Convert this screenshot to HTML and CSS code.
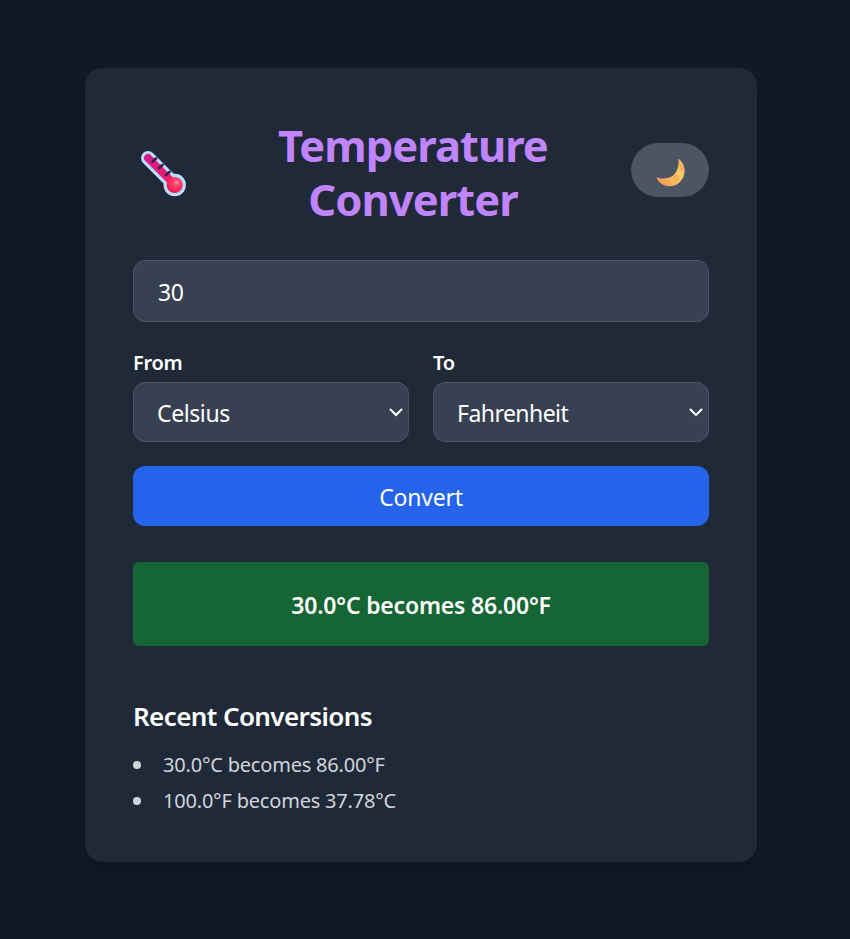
FILE: index.html
```html
<!DOCTYPE html>
<html lang="en">
<head>
<meta charset="utf-8">
<meta name="viewport" content="width=device-width, initial-scale=1">
<title>Temperature Converter</title>
<link rel="stylesheet" href="styles.css">
</head>
<body>
<main class="card">
  <header class="header">
    <svg class="thermometer" viewBox="0 0 48 48" aria-hidden="true">
      <defs>
        <linearGradient id="tube" x1="0" y1="0" x2="1" y2="1"><stop offset="0" stop-color="#d51b8b"/><stop offset="1" stop-color="#f51c68"/></linearGradient>
        <radialGradient id="bulb" cx=".62" cy=".35" r=".65"><stop offset="0" stop-color="#ff9cab"/><stop offset=".25" stop-color="#ff4b72"/><stop offset="1" stop-color="#f5174e"/></radialGradient>
      </defs>
      <path d="M8 8 34 34" stroke="#b9e0ff" stroke-width="14" stroke-linecap="round"/>
      <circle cx="34.700" cy="35" r="11.200" fill="#b9e0ff"/>
      <path d="M8 8 33 33" stroke="url(#tube)" stroke-width="8" stroke-linecap="round"/>
      <circle cx="34.700" cy="35" r="8.100" fill="url(#bulb)"/>
      <path d="m12.500 11.500 3.500-3M19 18l3.500-3M26 25l3.500-3" stroke="#37204f" stroke-width="2.900" stroke-linecap="round"/>
    </svg>
    <h1 class="title">Temperature<br>Converter</h1>
    <button class="theme" type="button" aria-label="Toggle theme">
      <svg class="moon" viewBox="0 0 30 30" aria-hidden="true">
        <defs><linearGradient id="moon" x1="1" y1="0" x2="0" y2="1"><stop offset="0" stop-color="#f4a65c"/><stop offset=".4" stop-color="#ffcf65"/><stop offset="1" stop-color="#f28b55"/></linearGradient></defs>
        <path d="M22.300.500c5 3.500 7.300 9.900 6 15.500-1.800 7.600-8.300 12.500-15.300 12.300C7.500 28.100 2.300 25 .500 19.300c4.500 1.800 11.800 2 16.500-1.800C21.500 13.800 23.500 7 22.300.500Z" fill="url(#moon)"/>
        <g fill="#f6b557" stroke="#e99a50" stroke-width=".6"><circle cx="20" cy="20" r="2.700"/><circle cx="11" cy="24" r="1.800"/><circle cx="25.500" cy="10" r="1.500"/></g>
      </svg>
    </button>
  </header>
  <input class="field amount" type="text" value="30" aria-label="Temperature">
  <div class="units">
    <div class="unit">
      <label class="label" for="from">From</label>
      <div class="field select" id="from"><span class="celsius">Celsius</span><svg class="chevron" viewBox="0 0 14 9" aria-hidden="true"><path d="m1 1 6 6 6-6"/></svg></div>
    </div>
    <div class="unit">
      <label class="label" for="to">To</label>
      <div class="field select" id="to"><span class="fahrenheit">Fahrenheit</span><svg class="chevron" viewBox="0 0 14 9" aria-hidden="true"><path d="m1 1 6 6 6-6"/></svg></div>
    </div>
  </div>
  <button class="convert" type="button">Convert</button>
  <div class="result">30.0°C becomes 86.00°F</div>
  <section>
    <h2 class="recent">Recent Conversions</h2>
    <ul class="history">
      <li>30.0°C becomes 86.00°F</li>
      <li>100.0°F becomes 37.78°C</li>
    </ul>
  </section>
</main>
</body>
</html>
```
FILE: styles.css
```css
* { box-sizing: border-box; }
body {
  margin: 0;
  min-height: 939px;
  padding: 68px 93px 0 85px;
  background: #111827;
  color: #fff;
  font-family: "Noto Sans", "Open Sans", sans-serif;
  font-size: 23px;
}
h1, h2, ul { margin: 0; padding: 0; }
button, input { font: inherit; color: inherit; border: 0; }
svg { display: block; fill: none; }
.card {
  height: 794px;
  padding: 50px 48px 48px;
  border-radius: 18px;
  background: #1f2937;
  box-shadow: 0 15px 22px -4px rgba(0, 0, 0, .1), 0 6px 9px -6px rgba(0, 0, 0, .1);
}
.header {
  height: 108px;
  display: grid;
  grid-template-columns: 62px 1fr 78px;
  align-items: center;
  margin-bottom: 34px;
}
.thermometer { width: 48px; height: 48px; margin-left: 7px; }
.title {
  margin-bottom: 4px;
  text-align: center;
  color: #c084fc;
  font-size: 43.5px;
  line-height: 54px;
  font-weight: 700;
  letter-spacing: -.95px;
}
.theme {
  width: 78px;
  height: 54px;
  margin-bottom: 8px;
  padding: 6px 0 0 2px;
  display: flex;
  align-items: center;
  justify-content: center;
  border-radius: 27px;
  background: #4b5563;
}
.moon { width: 30px; height: 30px; }
.field {
  width: 100%;
  border: 1px solid #4b5563;
  border-radius: 12px;
  background: #374151;
}
.amount { display: block; height: 62px; padding: 2px 24px 0; outline: 0; letter-spacing: -.3px; }
.units { display: grid; grid-template-columns: 1fr 1fr; gap: 24px; margin: 24px 0; }
.label { display: block; height: 36px; line-height: 33px; font-size: 20px; font-weight: 600; letter-spacing: -.3px; }
.select {
  height: 60px;
  padding: 1px 5px 0 23px;
  display: flex;
  align-items: center;
  justify-content: space-between;
}
.celsius { letter-spacing: -.4px; }
.fahrenheit { letter-spacing: -.55px; }
.chevron { width: 14px; height: 9px; margin-bottom: 1px; stroke: #fff; stroke-width: 2; }
.convert {
  display: block;
  width: 100%;
  height: 60px;
  padding: 1px 0 0;
  border-radius: 12px;
  background: #2563eb;
  letter-spacing: -.2px;
}
.result {
  height: 84px;
  margin: 36px 0 48px;
  border-radius: 6px;
  background: #166534;
  text-align: center;
  line-height: 87px;
  font-weight: 600;
  letter-spacing: -.2px;
}
.recent { height: 42px; margin-bottom: 12px; line-height: 45px; font-size: 26px; font-weight: 600; letter-spacing: -.6px; }
.history { list-style: none; color: #d1d5db; font-size: 20px; letter-spacing: -.2px; }
.history li { height: 30px; margin-bottom: 6px; display: flex; align-items: center; gap: 22px; padding-top: 3px; }
.history li::before { content: ""; width: 8px; height: 8px; border-radius: 50%; background: currentColor; }
```
